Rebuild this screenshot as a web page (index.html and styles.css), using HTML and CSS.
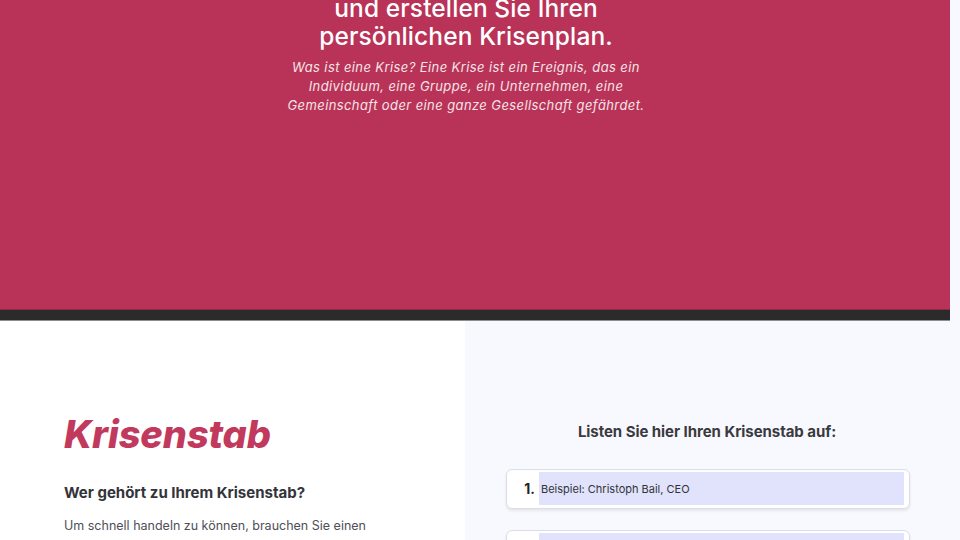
FILE: index.html
```html
<!DOCTYPE html>
<html lang="de">
<head>
<meta charset="utf-8">
<title>Krisenplan</title>
<link rel="stylesheet" href="styles.css">
</head>
<body>
<div class="page">
  <header class="hero">
    <div class="hero-inner">
      <h1 class="hero-title">und erstellen Sie Ihren<br>persönlichen Krisenplan.</h1>
      <p class="hero-lead">Was ist eine Krise? Eine Krise ist ein Ereignis, das ein<br>Individuum, eine Gruppe, ein Unternehmen, eine<br>Gemeinschaft oder eine ganze Gesellschaft gefährdet.</p>
    </div>
  </header>
  <div class="hero-bar"></div>
  <main class="section">
    <div class="col-left">
      <h2 class="section-title">Krisenstab</h2>
      <h3 class="sub-title">Wer gehört zu Ihrem Krisenstab?</h3>
      <p class="body-text">Um schnell handeln zu können, brauchen Sie einen<br>vordefinierten Krisenstab. Dieses Team sollte alle</p>
    </div>
    <div class="col-right">
      <h3 class="list-title">Listen Sie hier Ihren Krisenstab auf:</h3>
      <div class="list">
        <div class="entry">
          <span class="num">1.</span>
          <div class="field">Beispiel: Christoph Bail, CEO</div>
        </div>
        <div class="entry">
          <span class="num">2.</span>
          <div class="field"></div>
        </div>
      </div>
    </div>
  </main>
</div>
</body>
</html>
```
FILE: styles.css
```css
html, body {
  margin: 0;
  padding: 0;
}
body {
  background: #f8f9fe;
  font-family: "Inter", "Noto Sans", sans-serif;
  overflow: hidden;
}
.page {
  width: 960px;
  height: 540px;
  overflow: hidden;
}
.hero {
  display: flow-root;
  width: 950px;
  height: 310px;
  background: #b83357;
  box-sizing: border-box;
  padding-right: 18px;
  border-bottom: 1px solid #8e2a45;
}
.hero-inner {
  display: flex;
  flex-direction: column;
  align-items: center;
  text-align: center;
  margin-top: -6px;
}
.hero-title {
  margin: 0;
  color: #ffffff;
  font-size: 24.5px;
  line-height: 28px;
  font-weight: 500;
  letter-spacing: 0.1px;
}
.hero-lead {
  margin: 8px 0 0;
  color: #f6e3e8;
  font-size: 13px;
  line-height: 19px;
  font-style: italic;
  letter-spacing: 0.4px;
}
.hero-bar {
  width: 950px;
  height: 10px;
  background: #2b2b2b;
  border-bottom: 1px solid #8d8d8d;
}
.section {
  display: flex;
  height: 219px;
}
.col-left {
  width: 465px;
  background: #ffffff;
  box-sizing: border-box;
  padding: 91px 0 0 64px;
}
.section-title {
  margin: 0;
  color: #c13a5e;
  font-size: 38px;
  line-height: 44px;
  font-weight: 800;
  font-style: italic;
  letter-spacing: -0.1px;
}
.sub-title {
  margin: 27px 0 0;
  color: #33343a;
  font-size: 15px;
  line-height: 20px;
  font-weight: 700;
}
.body-text {
  margin: 13px 0 0;
  color: #4e4f57;
  font-size: 12.5px;
  line-height: 20px;
}
.col-right {
  flex: 1;
  background: #f8f9fe;
  box-sizing: border-box;
  padding: 101px 50px 0 41px;
}
.list-title {
  margin: 0 0 0 -2px;
  text-align: center;
  color: #3a3a40;
  font-size: 15px;
  line-height: 20px;
  font-weight: 700;
  letter-spacing: -0.05px;
}
.list {
  display: flex;
  flex-direction: column;
  gap: 21px;
  margin-top: 27px;
}
.entry {
  display: flex;
  align-items: stretch;
  height: 40px;
  background: #ffffff;
  border: 1px solid #dcdde6;
  border-radius: 6px;
  box-sizing: border-box;
  box-shadow: 0 2px 3px rgba(0, 0, 0, 0.08);
  padding: 2px 5px 3px 0;
}
.num {
  width: 32px;
  flex: none;
  display: flex;
  align-items: center;
  justify-content: flex-end;
  padding-right: 4px;
  box-sizing: border-box;
  font-size: 14px;
  font-weight: 700;
  color: #222;
}
.field {
  flex: 1;
  background: #e0e3fb;
  display: flex;
  align-items: center;
  padding-left: 2px;
  font-size: 11px;
  color: #33343a;
}
```
